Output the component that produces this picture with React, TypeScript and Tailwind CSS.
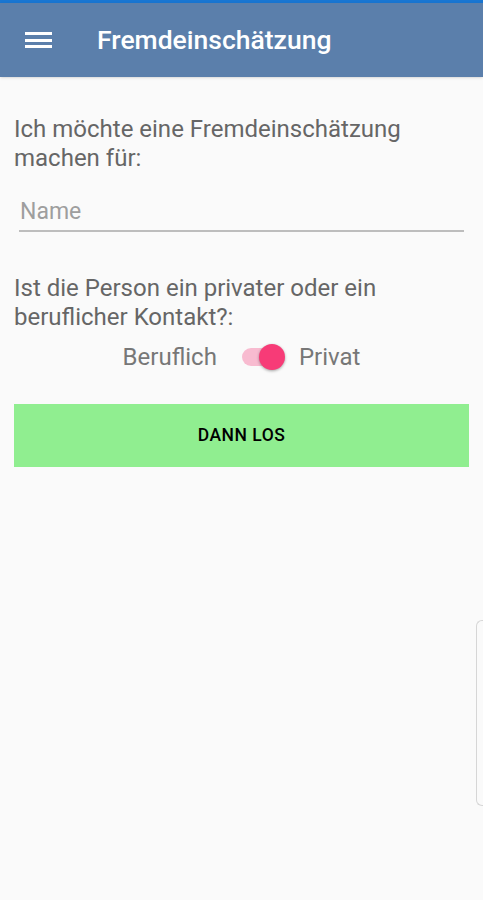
import { useState } from "react";

export default function App() {
  const [name, setName] = useState("");
  const [privat, setPrivat] = useState(true);

  return (
    <div
      className="relative min-h-[900px] w-full bg-[#fafafa]"
      style={{ fontFamily: "Roboto, 'Noto Sans', sans-serif" }}
    >
      <div className="h-[3px] bg-[#1976d2]" />
      <header className="flex h-[74px] items-center bg-[#5b7fab] shadow-sm">
        <button className="ml-[25px] flex h-[26px] w-[27px] flex-col justify-between py-[5px]">
          <span className="block h-[3px] w-full bg-white" />
          <span className="block h-[3px] w-full bg-white" />
          <span className="block h-[3px] w-full bg-white" />
        </button>
        <h1 className="ml-[45px] text-[26.5px] font-medium text-white">
          Fremdeinschätzung
        </h1>
      </header>

      <main className="px-[14px] pt-[38px]">
        <p className="text-[24px] leading-[29px] text-[#666]">
          Ich möchte eine Fremdeinschätzung machen für:
        </p>

        <div className="mt-[22px] px-[5px]">
          <input
            value={name}
            onChange={(e) => setName(e.target.value)}
            placeholder="Name"
            className="w-full border-b-2 border-[#bdbdbd] bg-transparent px-[1px] pb-0 text-[23px] text-[#444] outline-none placeholder:text-[#9e9e9e]"
          />
        </div>

        <p className="mt-[42px] text-[24px] leading-[29px] text-[#666]">
          Ist die Person ein privater oder ein beruflicher Kontakt?:
        </p>

        <div className="mt-[7px] flex items-center justify-center text-[24px] text-[#777]">
          <span>Beruflich</span>
          <button
            onClick={() => setPrivat(!privat)}
            className="relative ml-[22px] mr-[14px] h-[30px] w-[46px]"
          >
            <span className="absolute left-[3px] right-[3px] top-[6px] h-[18px] rounded-full bg-[#f8bbd0]" />
            <span
              className={
                privat
                  ? "absolute right-0 top-[2px] h-[26px] w-[26px] rounded-full bg-[#f73b77] shadow-[0_1px_3px_rgba(0,0,0,0.35)]"
                  : "absolute left-0 top-[2px] h-[26px] w-[26px] rounded-full bg-[#eeeeee] shadow-[0_1px_3px_rgba(0,0,0,0.35)]"
              }
            />
          </button>
          <span>Privat</span>
        </div>

        <button className="mt-[29px] flex h-[63px] w-full items-center justify-center bg-[#90ee90] text-[17.5px] font-medium tracking-[0.5px] text-black">
          DANN LOS
        </button>
      </main>

      <div className="absolute right-0 top-[620px] h-[186px] w-[7px] rounded-l-[6px] border border-r-0 border-[#d6d6d6] bg-[#fafafa]" />
    </div>
  );
}
